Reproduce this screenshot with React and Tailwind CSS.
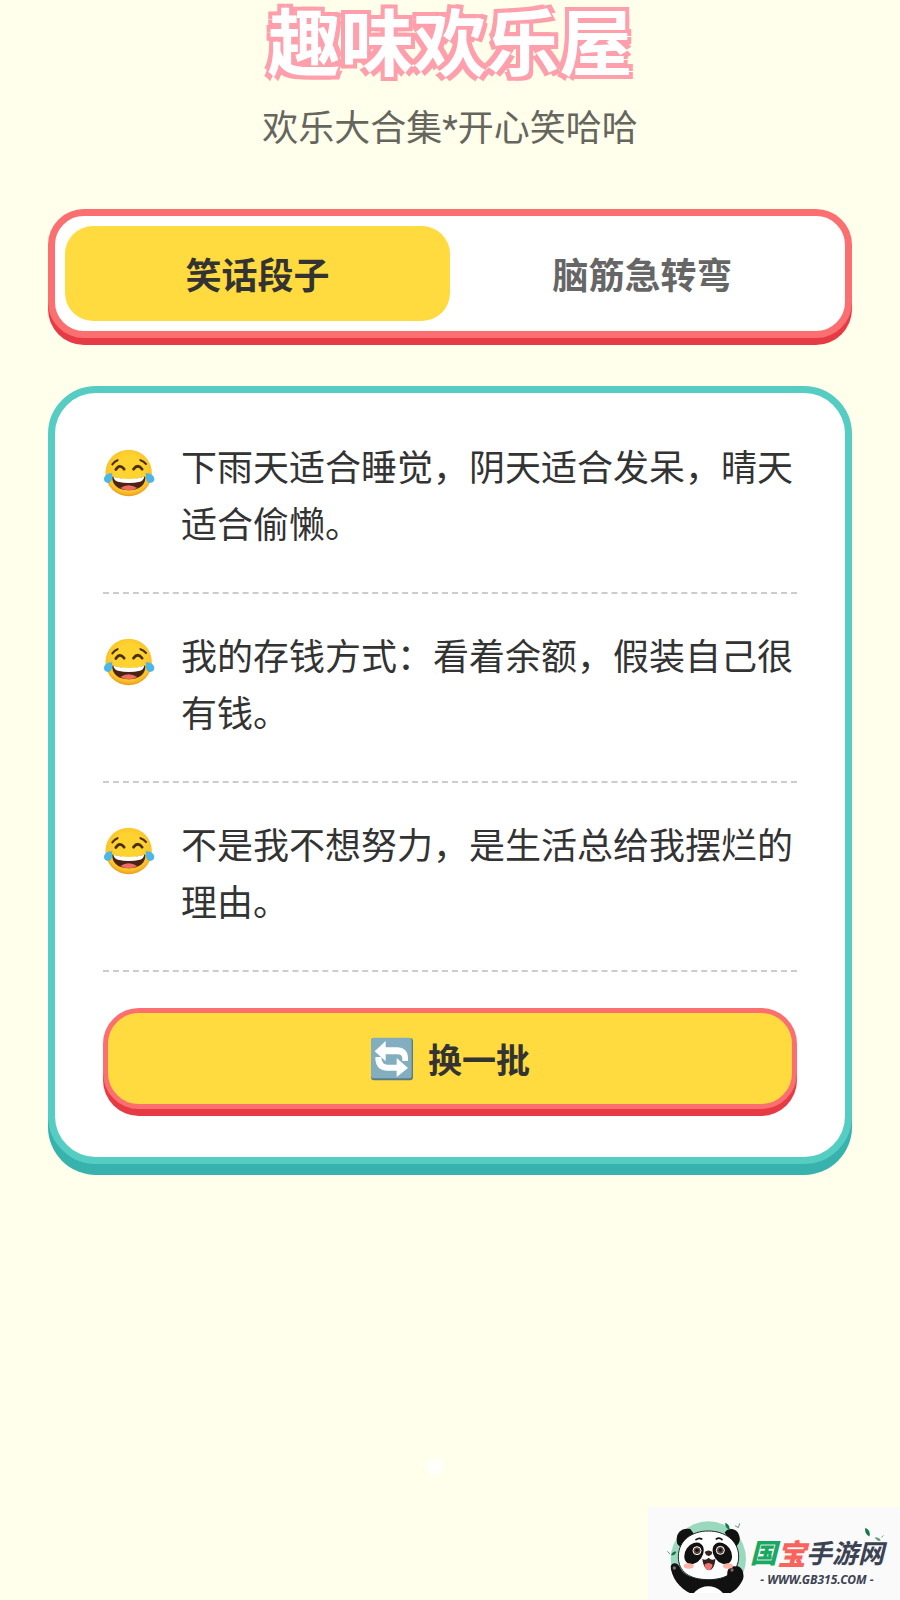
import { useState } from "react"

const TABS = [
    { id: "jokes", label: "笑话段子" },
    { id: "riddles", label: "脑筋急转弯" },
]

const JOKES = [
    "下雨天适合睡觉，阴天适合发呆，晴天适合偷懒。",
    "我的存钱方式：看着余额，假装自己很有钱。",
    "不是我不想努力，是生活总给我摆烂的理由。",
]

function JoyFace() {
    return (
        <svg viewBox="25 23 150 138" className="mt-2 h-[48px] w-[52px] shrink-0" aria-hidden="true">
            <defs>
                <radialGradient id="joy-skin" cx="50%" cy="42%" r="58%">
                    <stop offset="0.5" stopColor="#fdd32f" />
                    <stop offset="0.85" stopColor="#fbc229" />
                    <stop offset="1" stopColor="#e79d1c" />
                </radialGradient>
            </defs>
            <circle cx="99" cy="92" r="67" fill="url(#joy-skin)" />
            <g fill="none" stroke="#4b2f14" strokeLinecap="round" strokeWidth="6">
                <path d="M52 67Q58 58 67 55" />
                <path d="M133 55Q142 58 149 66" />
                <path d="M62 82Q73 64 86 81" strokeWidth="8" />
                <path d="M113 81Q126 64 138 81" strokeWidth="8" />
            </g>
            <path d="M52 102Q100 118 147 102C149 125 130 142 100 142C69 142 50 126 52 102Z" fill="#4a2413" />
            <path d="M55 103Q100 116 144 103Q142 115 132 117Q100 124 68 117Q57 115 55 103Z" fill="#fff" />
            <path d="M75 135Q98 119 124 135Q112 142 100 142Q86 142 75 135Z" fill="#ee6a65" />
            <path d="M52 93C40 91 27 99 28 111C29 123 46 124 50 112C52 105 50 99 52 93Z" fill="#4db6e8" />
            <path d="M148 93C160 91 174 99 173 111C171 123 154 124 150 112C148 105 150 99 148 93Z" fill="#4db6e8" />
        </svg>
    )
}

function RefreshTile() {
    return (
        <svg viewBox="34 48 130 132" className="h-[44px] w-[44px] shrink-0" aria-hidden="true">
            <rect x="36" y="51" width="126" height="127" rx="9" fill="#5c7c83" />
            <rect x="36" y="50" width="122" height="122" rx="8" fill="#82aebf" />
            <path
                d="M47 91L80 60V79H114C136 79 147 91 147 112V120H130V113C130 104 125 100 115 100H80V121Z"
                fill="#fff"
            />
            <path
                d="M49 108H67C68 124 74 131 86 131H113V111L147 141L113 168V149H86C60 149 49 135 49 108Z"
                fill="#fff"
            />
        </svg>
    )
}

function Panda() {
    return (
        <svg viewBox="0 0 270 270" className="h-[90px] w-[90px] shrink-0" aria-hidden="true">
            <defs>
                <clipPath id="panda-badge">
                    <path d="M0 0H270V170H258C256 205 238 235 212 249H89C60 235 34 205 31 165H0Z" />
                </clipPath>
            </defs>
            <g clipPath="url(#panda-badge)">
                <circle cx="145" cy="147" r="113" fill="#9bd9bf" />
                <path d="M52 102C44 72 61 53 91 57L102 72L64 114Z" fill="#111" />
                <path d="M194 68C205 51 230 55 237 75C243 91 237 102 227 111Z" fill="#111" />
                <path d="M31 172C35 154 55 157 61 175C72 196 95 207 145 207C190 207 201 199 204 185C208 162 244 160 249 188C257 217 235 250 205 270H83C48 247 28 207 31 172Z" fill="#111" />
                <ellipse cx="145" cy="276" rx="53" ry="47" fill="#fff" />
            </g>
            <path d="M145 63C96 63 56 90 55 139C54 186 90 209 145 209C200 209 237 185 236 138C235 91 194 63 145 63Z" fill="#fff" stroke="#222" strokeWidth="3" />
            <path d="M202 188C203 165 235 162 246 181C255 202 242 218 218 222C207 213 200 202 202 188Z" fill="#111" />
            <ellipse cx="102" cy="130" rx="26" ry="35" fill="#111" transform="rotate(35 102 130)" />
            <ellipse cx="187" cy="130" rx="26" ry="35" fill="#111" transform="rotate(-35 187 130)" />
            <g fill="#5b443c" stroke="#fff" strokeWidth="3">
                <circle cx="111" cy="122" r="12" />
                <circle cx="181" cy="121" r="12" />
            </g>
            <circle cx="111" cy="121" r="5" fill="#111" />
            <circle cx="181" cy="120" r="5" fill="#111" />
            <path d="M108 89Q117 82 125 87M169 87Q178 81 186 89" fill="none" stroke="#111" strokeWidth="5" strokeLinecap="round" />
            <path d="M134 126Q145 117 157 126Q156 136 146 138Q136 135 134 126Z" fill="#38251f" />
            <path d="M127 146Q136 153 146 143Q155 153 166 146C164 190 132 193 127 146Z" fill="#32201e" />
            <path d="M133 164Q145 154 158 164Q154 181 146 181Q137 181 133 164Z" fill="#f17272" />
            <ellipse cx="86" cy="168" rx="15" ry="8" fill="#ffb2a6" />
            <ellipse cx="204" cy="168" rx="15" ry="8" fill="#ffb2a6" />
            <circle cx="43" cy="174" r="5" fill="#806d69" />
            <circle cx="216" cy="180" r="5" fill="#806d69" />
            <path d="M196 38Q210 44 209 59Q194 54 196 38ZM33 136Q38 122 49 125Q46 137 33 136Z" fill="#137748" />
            <path d="M225 47L235 53L239 40M22 124L30 132" fill="none" stroke="#5e9b75" strokeWidth="3" />
        </svg>
    )
}

function SiteBadge() {
    return (
        <a
            href="#site"
            className="relative flex items-start self-end bg-[#fafafa] pt-[3px] pr-4 pl-3 font-bold text-[#3b4252] italic"
        >
            <Panda />
            <span className="flex flex-col items-center pt-6">
                <span className="flex items-center leading-9">
                    <span className="text-[27px] font-black text-[#1aa862]">国</span>
                    <span className="text-[29px] font-black text-[#f9635c]">宝</span>
                    <span className="text-[26px]">手游网</span>
                </span>
                <span className="font-['Noto_Sans','Open_Sans',sans-serif] text-[12px] leading-5">
                    - WWW.GB315.COM -
                </span>
            </span>
            <svg viewBox="0 0 48 36" className="absolute top-5 right-4 h-[15px] w-5" aria-hidden="true">
                <path d="M3 2Q17 8 13 23Q1 17 3 2Z" fill="#137748" />
                <path d="M27 26Q34 35 39 32Q37 25 27 26M42 25L47 20" fill="#5e9b75" stroke="#5e9b75" strokeWidth="2" />
            </svg>
        </a>
    )
}

export default function App() {
    const [activeTab, setActiveTab] = useState("jokes")

    return (
        <div className="relative flex min-h-screen flex-col overflow-hidden bg-[#ffffeb] font-['Noto_Sans_CJK_SC',sans-serif] text-[#333]">

            {/* HEADER */}
            <header className="mb-[54px] text-center font-['Roboto','Noto_Sans_CJK_SC',sans-serif]">
                <h1 className="text-[73px] leading-[90px] font-bold text-white [text-shadow:-4px_-4px_0_#ff9fab,4px_-4px_0_#ff9fab,-4px_4px_0_#ff9fab,4px_4px_0_#ff9fab]">
                    趣味欢乐屋
                </h1>
                <p className="mt-3.5 text-[36px] leading-[51px] text-[#66665e]">欢乐大合集*开心笑哈哈</p>
            </header>

            <main className="px-12">

                {/* TABS */}
                <div className="flex rounded-[36px] border-[7px] border-[#fb6f70] bg-white p-[10px] shadow-[0_7px_0_#e63b45]">
                    {TABS.map((tab) => (
                        <button
                            key={tab.id}
                            type="button"
                            aria-pressed={activeTab === tab.id}
                            onClick={() => setActiveTab(tab.id)}
                            className={
                                activeTab === tab.id
                                    ? "flex-1 rounded-[28px] bg-[#ffdb3f] py-5 text-[36px] leading-[55px] font-bold text-[#333]"
                                    : "flex-1 rounded-[28px] py-5 text-[36px] leading-[55px] font-bold text-[#666]"
                            }
                        >
                            {tab.label}
                        </button>
                    ))}
                </div>

                {/* JOKES */}
                <section className="mt-12 rounded-[48px] border-[7px] border-[#55cdc3] bg-white p-12 shadow-[0_11px_0_#38b2ac]">
                    <ul>
                        {JOKES.map((joke) => (
                            <li key={joke} className="mb-9 flex items-start gap-[26px] border-b-2 border-dashed border-[#ccc] pb-[37px]">
                                <JoyFace />
                                <p className="flex-1 font-['Roboto','Noto_Sans_CJK_SC',sans-serif] text-[36px] leading-[57px]">
                                    {joke}
                                </p>
                            </li>
                        ))}
                    </ul>
                    <button
                        type="button"
                        className="flex w-full items-center justify-center gap-3.5 rounded-[36px] border-[5px] border-[#fb6f70] bg-[#ffdb3f] py-5 text-[34px] leading-[51px] font-bold shadow-[0_7px_0_#e63b45]"
                    >
                        <RefreshTile />
                        换一批
                    </button>
                </section>
            </main>

            <span className="absolute bottom-[125px] left-[427px] size-4 rounded-full bg-white blur-[3px]" />

            <div className="mt-auto flex flex-col">
                <SiteBadge />
            </div>
        </div>
    )
}
